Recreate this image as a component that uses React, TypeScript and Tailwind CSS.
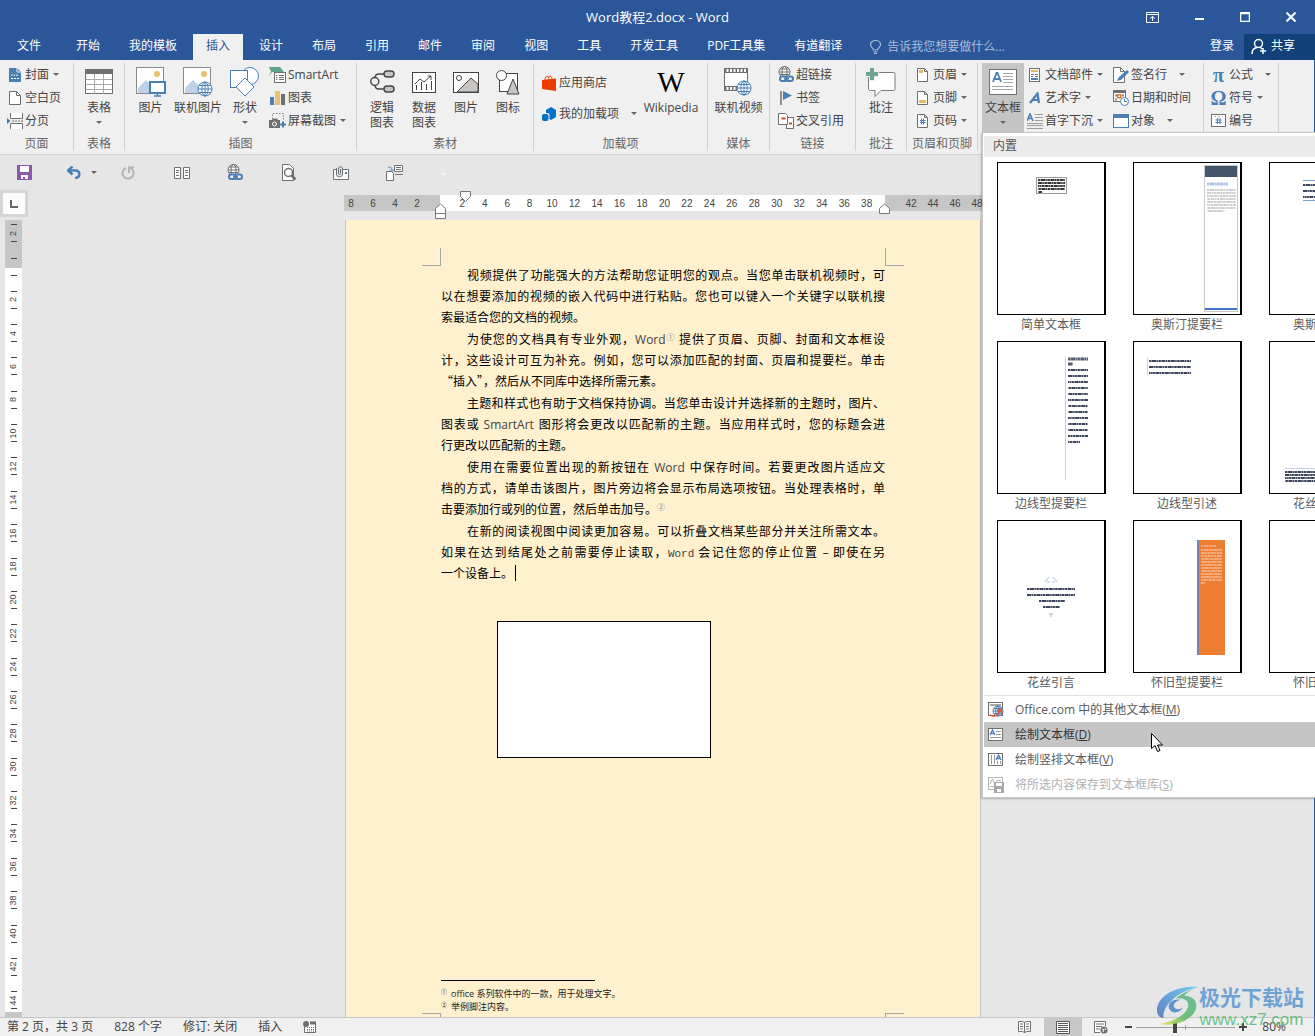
import React from "react";

type Kids = { children?: React.ReactNode };

const Svg = ({ w, h, children }: Kids & { w: number; h: number }) => (
  <svg width={w} height={h} viewBox={`0 0 ${w} ${h}`} fill="none" className="shrink-0" aria-hidden="true">
    {children}
  </svg>
);

const G = "#6f6f6f";
const B = "#4a7fb5";

const Caret = () => (
  <Svg w={6} h={3}>
    <path d="M0 0h6L3 3z" fill="#666" />
  </Svg>
);

/* ---------- ribbon icons ---------- */

const CoverIcon = () => (
  <Svg w={12} h={14}>
    <path d="M0 0h8l4 4v10H0z" fill={B} />
    <path d="M8 0v4h4" stroke="#f0f0f0" />
    <path d="M2 7.500l1.500-1 1.500 1 1.500-1 1.500 1 1.500-1M2 10.500h8" stroke="#fff" strokeDasharray="2 1" />
  </Svg>
);
const BlankIcon = () => (
  <Svg w={12} h={14}>
    <path d="M.5.5h7l4 4v9H.5z" fill="#fff" stroke={G} />
    <path d="M7.500.5v4h4" stroke={G} />
  </Svg>
);
const BreakIcon = () => (
  <Svg w={16} h={16}>
    <path d="M3.500 0v5.500h12V0M3.500 16v-5.500h12V16" fill="#fff" stroke={G} />
    <path d="M5 8h11" stroke={G} strokeDasharray="2 1" />
    <path d="M0 5l3.500 3L0 11z" fill="#2f7cc4" />
  </Svg>
);
const TableIcon = () => (
  <Svg w={28} h={26}>
    <rect x=".5" y=".5" width="27" height="24" fill="#fff" stroke={G} />
    <rect width="28" height="5" fill={G} />
    <path d="M1 10.500h26M1 15.500h26M1 20.500h26M9.500 5v20M18.500 5v20" stroke="#a9a9a9" />
  </Svg>
);
const Globe = ({ x, y, r }: { x: number; y: number; r: number }) => (
  <g stroke={B} fill="#fff">
    <circle cx={x} cy={y} r={r} />
    <ellipse cx={x} cy={y} rx={r * 0.45} ry={r} fill="none" />
    <path d={`M${x - r} ${y}h${2 * r}M${x - r + 1} ${y - r / 2}h${2 * r - 2}M${x - r + 1} ${y + r / 2}h${2 * r - 2}M${x} ${y - r}v${2 * r}`} fill="none" />
  </g>
);
const Photo = () => (
  <g>
    <rect x=".5" y=".5" width="27" height="26" fill="#fff" stroke="#8a8a8a" />
    <circle cx="21" cy="7" r="3" fill="#eec071" />
    <path d="M2 26v-5l8-8 9 9v4z" fill="#bfd1e8" />
  </g>
);
const PictureIcon = () => (
  <Svg w={30} h={30}>
    <Photo />
    <rect x="14" y="15" width="15" height="11" fill="#fff" stroke={B} strokeWidth="2" />
    <path d="M21.500 27v2M18 29h7" stroke={B} strokeWidth="1.500" />
  </Svg>
);
const OnlinePictureIcon = () => (
  <Svg w={30} h={30}>
    <Photo />
    <Globe x={22} y={22} r={7} />
  </Svg>
);
const ShapesIcon = () => (
  <Svg w={30} h={30}>
    <circle cx="20" cy="9" r="8.500" fill="#fff" stroke={B} />
    <rect x=".5" y="3.500" width="17" height="17" fill="#fff" stroke={B} />
    <path d="M15 11l9 9-9 9-9-9z" fill="#fff" stroke={B} />
  </Svg>
);
const SmartArtIcon = () => (
  <Svg w={17} h={16}>
    <path d="M0 0h11l4 5H3L0 9l2-4.500z" fill="#5fa38a" />
    <rect x="5.500" y="5.500" width="11" height="10" fill="#fff" stroke={G} />
    <path d="M7 8.500h1.500M7 10.500h1.500M7 12.500h1.500M10 8.500h5M10 10.500h5M10 12.500h5" stroke={G} />
  </Svg>
);
const ChartIcon = () => (
  <Svg w={15} h={14}>
    <path d="M0 6h4v8H0z" fill={B} />
    <path d="M5 0h5v14H5z" fill="#eec071" />
    <path d="M11 3h4v11h-4z" fill={G} />
  </Svg>
);
const ScreenshotIcon = () => (
  <Svg w={17} h={15}>
    <path d="M3.500 6V.5h11v7" stroke="#888" strokeDasharray="1.500 1.500" />
    <path d="M0 7h3l1-1.500h4L9 7h2v8H0z" fill={G} />
    <circle cx="5.500" cy="11" r="2" fill={G} stroke="#fff" />
    <path d="M14 8.500v6M11 11.500h6" stroke={B} strokeWidth="2" />
  </Svg>
);
const LogicIcon = () => (
  <Svg w={25} h={24}>
    <path d="M14 4H9C6 4 5 6 5 8M14 19H9c-3 0-4-2-4-4" stroke="#444" strokeWidth="1.400" />
    <circle cx="4.800" cy="11.500" r="4" fill="#f0f0f0" stroke="#444" strokeWidth="1.400" />
    <rect x="14" y="1" width="10" height="6" rx="3" fill="#c9c5c2" stroke="#444" strokeWidth="1.400" />
    <rect x="14" y="16" width="10" height="6" rx="3" fill="#c9c5c2" stroke="#444" strokeWidth="1.400" />
  </Svg>
);
const DataChartIcon = () => (
  <Svg w={24} h={21}>
    <rect x=".5" y=".5" width="23" height="20" fill="#fff" stroke="#444" />
    <path d="M4.500 18v-5M9.500 18v-8M14.500 18v-6M19.500 18v-9" stroke="#444" />
    <path d="M3 12l5-5 4 3 7-6M15.500 4H19v4" stroke="#444" />
  </Svg>
);
const ImageIcon = () => (
  <Svg w={26} h={21}>
    <rect x=".5" y=".5" width="25" height="20" fill="#fff" stroke="#444" />
    <path d="M4 20L18 6l7 6v8z" fill="#c9c5c2" stroke="#444" />
    <circle cx="6" cy="6" r="2.500" fill="#fff" stroke="#444" />
  </Svg>
);
const GlyphIcon = () => (
  <Svg w={24} h={25}>
    <rect x="3.500" y="3.500" width="18" height="18" fill="#fff" stroke="#444" />
    <circle cx="5.500" cy="5.500" r="5" fill="#fff" stroke="#444" />
    <path d="M17 9l6 15H11z" fill="#c9c5c2" stroke="#444" />
  </Svg>
);
const StoreIcon = () => (
  <Svg w={14} h={16}>
    <path d="M0 5l14-1.500V16L0 14z" fill="#eb3c00" />
    <path d="M3 5c0-5 4-5 4 0M6 3c1-3 4-2 4 1" stroke="#eb3c00" />
  </Svg>
);
const AddinIcon = () => (
  <Svg w={14} h={14}>
    <path d="M4 3l5-3 5 3v7l-5 3-5-3z" fill="#0072c6" />
    <rect x="-1" y="6" width="8.500" height="9" rx="2" fill="#f0f0f0" />
    <rect x="0" y="7" width="6.500" height="7" rx="2" fill="#0072c6" />
  </Svg>
);
const VideoIcon = () => (
  <Svg w={29} h={29}>
    <rect x=".5" y=".5" width="23" height="22" fill="#fff" stroke={G} />
    <path d="M1 2.500h23M1 20.500h23" stroke={G} strokeWidth="3" strokeDasharray="1.500 2" />
    <path d="M0 4.500h24M0 18.500h24" stroke={G} />
    <Globe x={20} y={20} r={7} />
  </Svg>
);
const HyperlinkIcon = () => (
  <Svg w={16} h={17}>
    <g stroke={G}>
      <circle cx="6.500" cy="6" r="5.500" fill="#fff" />
      <ellipse cx="6.500" cy="6" rx="2.500" ry="5.500" />
      <path d="M1 6h11M2 3h9M2 8.500h9" />
    </g>
    <g stroke={B} strokeWidth="2">
      <rect x="2" y="10.500" width="7" height="4.500" rx="2.200" fill="#f0f0f0" />
      <rect x="8" y="10.500" width="7" height="4.500" rx="2.200" fill="#f0f0f0" />
      <path d="M6 12.700h5" />
    </g>
  </Svg>
);
const BookmarkIcon = () => (
  <Svg w={12} h={14}>
    <path d="M1 0v14" stroke={G} strokeWidth="1.500" />
    <path d="M3 0l9 4.500L3 9z" fill={B} />
  </Svg>
);
const CrossRefIcon = () => (
  <Svg w={16} h={16}>
    <rect x="8.500" y="4.500" width="7" height="11" fill="#fff" stroke={G} />
    <path d="M.5.5h7l2 2v9H.5z" fill="#fff" stroke={G} />
    <path d="M3.500 5.500h4M11 10.500h3" stroke="#d24726" strokeWidth="2" />
  </Svg>
);
const CommentIcon = () => (
  <Svg w={30} h={29}>
    <path d="M4.500 4.500h23a1.500 1.500 0 011.500 1.500v15a1.500 1.500 0 01-1.500 1.500H15l-6 6v-6H4.500A2 2 0 012.500 20V6z" fill="#fff" stroke="#7d7d7d" />
    <path d="M6 0v13M0 6h13" stroke="#f0f0f0" strokeWidth="6" />
    <path d="M6 0v12M0 6h12" stroke="#6fa592" strokeWidth="4" />
  </Svg>
);
const PageIcon = ({ kind }: { kind: "head" | "foot" | "num" }) => (
  <Svg w={11} h={14}>
    <path d="M.5.5h7l3 3v10H.5z" fill="#fff" stroke={G} />
    <path d="M7.500.5v3h3" stroke={G} />
    {kind === "head" && <path d="M2 2h4v3H2z" fill="#e8b860" />}
    {kind === "foot" && <path d="M2 9h7v3H2z" fill="#e8b860" />}
    {kind === "num" && <path d="M4.500 4.500v6M6.500 4.500v6M3 6.500h5.500M3 8.500h5.500" stroke={B} />}
  </Svg>
);
const TextBoxIcon = () => (
  <Svg w={28} h={26}>
    <rect x=".5" y=".5" width="27" height="25" fill="#fff" stroke={G} />
    <path d="M4 13L7.500 4h1L12 13M5.500 10h5" stroke={B} strokeWidth="1.800" />
    <path d="M14 4.500h10M14 7.500h10M14 10.500h10M14 13.500h10M3 17.500h21M3 20.500h21" stroke="#a6a6a6" />
  </Svg>
);
const PartsIcon = () => (
  <Svg w={11} h={14}>
    <rect x=".5" y=".5" width="10" height="13" fill="#fff" stroke={G} />
    <path d="M2 3h7" stroke="#e8b860" strokeWidth="2" />
    <path d="M2 6.500h3M6 6.500h3M6 8.500h3M2 8.500h2" stroke={G} />
    <path d="M2 11h7" stroke={B} strokeWidth="2" />
  </Svg>
);
const WordArtIcon = () => (
  <Svg w={12} h={12}>
    <path d="M1 11L8.500 1.500 10 11M4 8h6" stroke={B} strokeWidth="2.200" />
  </Svg>
);
const DropCapIcon = () => (
  <Svg w={16} h={16}>
    <path d="M0 8L3 1l3 7M1 5.500h4" stroke={B} strokeWidth="1.600" />
    <path d="M8 1.500h8M8 4.500h8M8 7.500h8M0 10.500h16M0 12.500h16M0 15.500h16" stroke="#9b9b9b" />
  </Svg>
);
const SignatureIcon = () => (
  <Svg w={16} h={16}>
    <path d="M.5.5h7l4 4v11H.5z" fill="#fff" stroke={G} />
    <path d="M7.500.5v4h4" stroke={G} />
    <path d="M4 14l2-4 8-7 2 2-8 8z" fill={B} />
  </Svg>
);
const DateIcon = () => (
  <Svg w={16} h={16}>
    <rect x=".5" y=".5" width="12" height="11" fill="#fff" stroke={G} />
    <path d="M0 1.500h13" stroke={G} strokeWidth="3" />
    <path d="M2 5.500h2M9 5.500h2M2 9.500h2" stroke="#888" strokeWidth="2" />
    <rect x="4.800" y="4.800" width="3" height="3" stroke="#e07a1f" strokeWidth="1.500" />
    <circle cx="11.500" cy="11.500" r="4" fill="#fff" stroke={B} />
    <path d="M11.500 9v2.500H14" stroke={B} />
  </Svg>
);
const ObjectIcon = () => (
  <Svg w={16} h={14}>
    <rect x=".5" y=".5" width="15" height="13" fill="#fff" stroke={B} />
    <path d="M0 2h16" stroke={B} strokeWidth="4" />
  </Svg>
);
const NumberIcon = () => (
  <Svg w={15} h={13}>
    <rect x=".5" y=".5" width="14" height="12" fill="#fff" stroke={G} />
    <path d="M6.500 4v6M9 4v6M4.500 6h6M4.500 8.500h6" stroke={B} />
    <path d="M3 2.500h2M7 2.500h2M11 2.500h1" stroke="#aaa" />
  </Svg>
);

/* ---------- ribbon parts ---------- */

const Group = ({ label, cls, children }: Kids & { label: string; cls: string }) => (
  <section className={`flex shrink-0 flex-col ${cls}`} aria-label={label}>
    <div className="flex h-[69px] flex-1 border-r border-[#d0d0d0]">{children}</div>
    <div className="h-[19px] border-r border-[#d0d0d0] text-center leading-[24px] text-[#666]">{label}</div>
  </section>
);

const Small = ({ icon, text, caret, far }: { icon: React.ReactNode; text: string; caret?: boolean; far?: boolean }) => (
  <button className="flex h-[23px] items-center whitespace-nowrap">
    <span className="flex w-[20px] items-center justify-center pr-px">{icon}</span>
    <span>{text}</span>
    {caret && (
      <span className={far ? "pl-3" : "pl-1"}>
        <Caret />
      </span>
    )}
  </button>
);

const Big = ({ icon, lines, caret, cls }: { icon: React.ReactNode; lines: string[]; caret?: boolean; cls: string }) => (
  <button className={`flex h-[69px] flex-col items-center ${cls}`}>
    <span className="flex h-[37px] items-center justify-center pt-px">{icon}</span>
    {lines.map((l) => (
      <span key={l} className="h-[15px] leading-[15px] whitespace-nowrap">
        {l}
      </span>
    ))}
    {caret && (
      <span className="flex h-[14px] items-center">
        <Caret />
      </span>
    )}
  </button>
);

const Serif = ({ children }: Kids) => (
  <span className="font-['Liberation_Serif',serif] text-[20px] leading-none font-bold text-[#4a7fb5]">{children}</span>
);

/* ---------- gallery ---------- */

const Lines = ({ x, y, w, n, step, color, last = 0.6, sw = 1.5 }: { x: number; y: number; w: number; n: number; step: number; color: string; last?: number; sw?: number }) => (
  <g stroke={color} strokeWidth={sw} strokeDasharray="2.500 .5 4 .4 1.500 .5" opacity=".85">
    {Array.from({ length: n }, (_, i) => (
      <path key={i} d={`M${x} ${y + i * step}h${i === n - 1 ? w * last : w}`} strokeDashoffset={i * 3} />
    ))}
  </g>
);

const NAVY = "#1b2440";

const gallery: { label: string; art: React.ReactNode }[] = [
  {
    label: "简单文本框",
    art: (
      <>
        <rect x="38.500" y="14.500" width="30" height="16" stroke="#999" />
        <Lines x={40} y={17} w={27} n={5} step={3} color="#111" last={0.15} sw={2} />
      </>
    ),
  },
  {
    label: "奥斯汀提要栏",
    art: (
      <>
        <rect x="70.500" y="2.500" width="33" height="146" stroke="#c9c9c9" />
        <rect x="71" y="3" width="32" height="11" fill="#44546a" />
        <Lines x={73} y={21} w={21} n={1} step={3} color="#9db8e3" last={1} sw={3} />
        <Lines x={73} y={27} w={29} n={8} step={3} color="#b5b5b5" />
        <path d="M71 146h32" stroke="#4472c4" strokeWidth="2" />
      </>
    ),
  },
  {
    label: "奥斯汀引言",
    art: (
      <>
        <path d="M33 17.500h60M33 37.500h60" stroke="#7d9fd8" />
        <Lines x={33} y={22} w={58} n={3} step={6} color={NAVY} sw={2} />
      </>
    ),
  },
  {
    label: "边线型提要栏",
    art: (
      <>
        <path d="M67.500 14v124" stroke="#c3cee6" />
        <Lines x={70} y={17} w={20} n={2} step={5} color="#333c55" last={0.25} sw={3} />
        <Lines x={70} y={28} w={20} n={13} step={6} color={NAVY} sw={2} />
      </>
    ),
  },
  {
    label: "边线型引述",
    art: (
      <>
        <path d="M13.500 16v17" stroke="#c3cee6" />
        <Lines x={15} y={19} w={42} n={3} step={6} color={NAVY} last={1} sw={2} />
      </>
    ),
  },
  {
    label: "花丝提要栏",
    art: (
      <>
        <path d="M15 126.500h80" stroke="#c3cee6" />
        <Lines x={15} y={130} w={80} n={4} step={3} color={NAVY} sw={2} />
      </>
    ),
  },
  {
    label: "花丝引言",
    art: (
      <>
        <path d="M47 61l4-5M59 61l-4-5M49 61h3M54 61h3M51 93h4M53 92v4" stroke="#a9bedd" />
        <Lines x={29} y={68} w={48} n={2} step={6} color={NAVY} last={1} sw={2} />
        <Lines x={41} y={80} w={26} n={1} step={6} color={NAVY} last={1} sw={2} />
        <Lines x={45} y={86} w={17} n={1} step={6} color={NAVY} last={1} sw={2} />
      </>
    ),
  },
  {
    label: "怀旧型提要栏",
    art: (
      <>
        <rect x="63" y="19" width="28" height="115" fill="#ed7d31" />
        <path d="M64 19v115" stroke="#6f86bd" strokeWidth="2" />
        <Lines x={67} y={25} w={15} n={1} step={3} color="#f6bf98" last={1} />
        <Lines x={67} y={29} w={21} n={12} step={3} color="#f8cbad" last={0.2} />
      </>
    ),
  },
  { label: "怀旧型引言", art: null },
];

const ArtBox = ({ label, art }: { label: string; art: React.ReactNode }) => (
  <button className="flex h-[179px] w-[136px] flex-col items-center">
    <span className="block h-[153px] w-[109px] border border-r-2 border-black bg-white">
      <svg width="106" height="151" viewBox="0 0 106 151" fill="none" aria-hidden="true">
        {art}
      </svg>
    </span>
    <span className="h-[20px] leading-[20px]">{label}</span>
  </button>
);

const MenuOfficeIcon = () => (
  <Svg w={17} h={16}>
    <rect x=".5" y=".5" width="14" height="13" fill="#fff" stroke={G} />
    <path d="M2 3h11" stroke="#aaa" strokeWidth="2" />
    <Globe x={10} y={9} r={5} />
    <path d="M2 13c6 3 9-1 10-5M9 9l4-2 1 4" stroke="#e8562a" strokeWidth="1.600" />
  </Svg>
);
const MenuHIcon = () => (
  <Svg w={15} h={13}>
    <rect x=".5" y=".5" width="14" height="12" fill="#fff" stroke={G} />
    <path d="M2 7l2.500-5L7 7M3 5.500h3" stroke={B} strokeWidth="1.300" />
    <path d="M8 3.500h5M8 6.500h5M2 9.500h11" stroke="#999" />
  </Svg>
);
const MenuVIcon = () => (
  <Svg w={15} h={13}>
    <rect x=".5" y=".5" width="14" height="12" fill="#fff" stroke={G} />
    <path d="M3.500 2v9M6.500 2v9M9.500 8v3M12.500 8v3" stroke="#999" />
    <path d="M8 7l2.500-5L13 7M9 5.500h3" stroke={B} strokeWidth="1.300" />
  </Svg>
);
const MenuSaveIcon = () => (
  <Svg w={17} h={16}>
    <rect x=".5" y=".5" width="14" height="12" fill="#fff" stroke="#b5b5b5" />
    <path d="M2 7l2.500-5L7 7M8 3.500h5M2 9.500h4" stroke="#b5b5b5" />
    <path d="M6 5h10v11H6z" fill="#a9a9a9" />
    <path d="M8 6h6v3H8zM9 12h4v3H9z" fill="#fff" />
  </Svg>
);

const MenuItem = ({ icon, text, k, cls }: { icon: React.ReactNode; text: string; k: string; cls: string }) => (
  <button role="menuitem" className={`flex h-[25px] w-full items-center text-left ${cls}`}>
    <span className="flex w-[31px] items-center pl-1">{icon}</span>
    <span>
      {text}(<u>{k}</u>)
    </span>
  </button>
);

const TextBoxMenu = () => (
  <div
    role="menu"
    className="absolute top-[69px] left-0 z-20 w-[420px] border border-[#c6c6c6] bg-white text-[#5a5a5a] shadow-[-1px_1px_2px_rgba(0,0,0,0.25)]"
  >
    <div className="mt-[3px] ml-px h-[21px] bg-[#ebebeb] pl-[9px] leading-[20px] text-[#555]">内置</div>
    <div className="grid w-[408px] grid-cols-3 pt-[5px]">
      {gallery.map((g) => (
        <ArtBox key={g.label} {...g} />
      ))}
    </div>
    <div className="-mt-1 ml-px border-t border-[#e1e1e1] pt-px">
      <MenuItem icon={<MenuOfficeIcon />} text="Office.com 中的其他文本框" k="M" cls="" />
      <MenuItem icon={<MenuHIcon />} text="绘制文本框" k="D" cls="bg-[#c5c5c5] text-[#333]" />
      <MenuItem icon={<MenuVIcon />} text="绘制竖排文本框" k="V" cls="" />
      <MenuItem icon={<MenuSaveIcon />} text="将所选内容保存到文本框库" k="S" cls="text-[#b1b1b1]" />
    </div>
    <svg className="absolute top-[600px] left-[168px]" width="13" height="20" viewBox="0 0 13 20" aria-hidden="true">
      <path d="M.5.500v15l3.500-3 2.500 6 2.500-1-2.500-5.500h5z" fill="#fff" stroke="#000" />
    </svg>
  </div>
);

/* ---------- title bar and tabs ---------- */

const tabsBefore = ["开始", "我的模板"];
const tabsAfter = ["设计", "布局", "引用", "邮件", "审阅", "视图", "工具", "开发工具", "PDF工具集", "有道翻译"];

const Header = () => (
  <header className="bg-[#2b579a] text-white">
    <div className="grid h-[34px] grid-cols-[1fr_auto_1fr] items-center">
      <span />
      <h1 className="pt-px text-[13px]">Word教程2.docx - Word</h1>
      <div className="flex h-full items-center justify-end gap-[36px] pr-[19px]">
        <button aria-label="功能区显示选项">
          <Svg w={13} h={11}>
            <path d="M.5.5h12v10H.5zM1 2.500h12M6.500 9V4.500M4 6.500l2.500-2 2.500 2" stroke="#fff" />
          </Svg>
        </button>
        <button aria-label="最小化" className="pt-1">
          <Svg w={9} h={2}>
            <path d="M0 1h9" stroke="#fff" strokeWidth="2" />
          </Svg>
        </button>
        <button aria-label="最大化">
          <Svg w={10} h={10}>
            <path d="M.5.5h9v9h-9zM0 1.500h10" stroke="#fff" strokeWidth="1.500" />
          </Svg>
        </button>
        <button aria-label="关闭">
          <Svg w={10} h={10}>
            <path d="M.5.500l9 9M9.500.5l-9 9" stroke="#fff" strokeWidth="2" />
          </Svg>
        </button>
      </div>
    </div>
    <nav className="flex h-[26px] items-stretch whitespace-nowrap">
      <div className="flex gap-[3px]">
        <button className="w-[60px] pb-0.5 pl-[17px] text-left">文件</button>
        {tabsBefore.map((t) => (
          <button key={t} className="px-[13px] pb-0.5">
            {t}
          </button>
        ))}
        <button className="bg-[#f0f0f0] px-[13px] pb-0.5 text-[#2b579a]">插入</button>
        {tabsAfter.map((t) => (
          <button key={t} className="px-[13px] pb-0.5">
            {t}
          </button>
        ))}
      </div>
      <label className="flex items-center gap-1.5 pl-[15px] text-[#b1c3e0]">
        <Svg w={11} h={14}>
          <path d="M3.500 10c0-2-3-2.500-3-5.500a5 4 0 0110 0c0 3-3 3.500-3 5.500zM3.500 12h4M4 13.500h3" stroke="#a9bcdb" strokeWidth="1.200" />
        </Svg>
        <input className="w-[160px] bg-transparent outline-none placeholder:text-[#a9bcdb]" placeholder="告诉我您想要做什么..." />
      </label>
      <div className="ml-auto flex">
        <button className="pr-[10px] pb-0.5">登录</button>
        <button className="flex w-[71px] items-center gap-1 bg-[#124078] pb-0.5 pl-[7px]">
          <Svg w={16} h={17}>
            <circle cx="7.500" cy="5.500" r="4" stroke="#fff" strokeWidth="1.500" />
            <path d="M1 16c0-4 2-6 5-6.500M9 9l2 2M12 10v6M9 13h6" stroke="#fff" strokeWidth="1.500" />
          </Svg>
          共享
        </button>
      </div>
    </nav>
  </header>
);

const Ribbon = () => (
  <div className="flex h-[95px] border-r border-b border-r-[#2b579a] border-b-[#d2d2d2] bg-[#f0f0f0] pt-[3px] pb-1 text-[#444]">
    <Group label="页面" cls="w-[74px]">
      <div className="flex flex-col pl-[5px]">
        <Small icon={<CoverIcon />} text="封面" caret />
        <Small icon={<BlankIcon />} text="空白页" />
        <Small icon={<BreakIcon />} text="分页" />
      </div>
    </Group>
    <Group label="表格" cls="w-[51px]">
      <Big icon={<TableIcon />} lines={["表格"]} caret cls="w-full" />
    </Group>
    <Group label="插图" cls="w-[232px]">
      <Big icon={<PictureIcon />} lines={["图片"]} cls="ml-[3px] w-[45px]" />
      <Big icon={<OnlinePictureIcon />} lines={["联机图片"]} cls="w-[50px]" />
      <Big icon={<ShapesIcon />} lines={["形状"]} caret cls="w-[44px]" />
      <div className="flex flex-col pl-px">
        <Small icon={<SmartArtIcon />} text="SmartArt" />
        <Small icon={<ChartIcon />} text="图表" />
        <Small icon={<ScreenshotIcon />} text="屏幕截图" caret />
      </div>
    </Group>
    <Group label="素材" cls="w-[177px]">
      <Big icon={<LogicIcon />} lines={["逻辑", "图表"]} cls="ml-[4px] w-[42px]" />
      <Big icon={<DataChartIcon />} lines={["数据", "图表"]} cls="w-[42px]" />
      <Big icon={<ImageIcon />} lines={["图片"]} cls="w-[42px]" />
      <Big icon={<GlyphIcon />} lines={["图标"]} cls="w-[42px]" />
    </Group>
    <Group label="加载项" cls="w-[174px]">
      <div className="flex flex-col gap-2 pt-2 pl-[5px]">
        <Small icon={<StoreIcon />} text="应用商店" />
        <Small icon={<AddinIcon />} text="我的加载项" caret far />
      </div>
      <Big
        icon={<span className="font-['Liberation_Serif',serif] text-[29px] leading-none text-black">W</span>}
        lines={["Wikipedia"]}
        cls="w-[68px]"
      />
    </Group>
    <Group label="媒体" cls="w-[62px]">
      <Big icon={<VideoIcon />} lines={["联机视频"]} cls="w-full" />
    </Group>
    <Group label="链接" cls="w-[86px]">
      <div className="flex flex-col pl-[6px]">
        <Small icon={<HyperlinkIcon />} text="超链接" />
        <Small icon={<BookmarkIcon />} text="书签" />
        <Small icon={<CrossRefIcon />} text="交叉引用" />
      </div>
    </Group>
    <Group label="批注" cls="w-[51px]">
      <Big icon={<CommentIcon />} lines={["批注"]} cls="w-full" />
    </Group>
    <Group label="页眉和页脚" cls="w-[71px]">
      <div className="flex flex-col pl-[6px]">
        <Small icon={<PageIcon kind="head" />} text="页眉" caret />
        <Small icon={<PageIcon kind="foot" />} text="页脚" caret />
        <Small icon={<PageIcon kind="num" />} text="页码" caret />
      </div>
    </Group>
    <Group label="文本" cls="w-[226px]">
      <div className="relative ml-[4px] h-[70px] w-[42px] bg-[#c5c5c5]">
        <Big icon={<TextBoxIcon />} lines={["文本框"]} caret cls="w-full" />
        <TextBoxMenu />
      </div>
      <div className="flex w-[87px] flex-col pl-px">
        <Small icon={<PartsIcon />} text="文档部件" caret />
        <Small icon={<WordArtIcon />} text="艺术字" caret />
        <Small icon={<DropCapIcon />} text="首字下沉" caret />
      </div>
      <div className="flex flex-col">
        <Small icon={<SignatureIcon />} text="签名行" caret far />
        <Small icon={<DateIcon />} text="日期和时间" />
        <Small icon={<ObjectIcon />} text="对象" caret far />
      </div>
    </Group>
    <Group label="符号" cls="w-[75px]">
      <div className="flex flex-col pl-[5px]">
        <Small icon={<Serif>π</Serif>} text="公式" caret far />
        <Small icon={<Serif>Ω</Serif>} text="符号" caret />
        <Small icon={<NumberIcon />} text="编号" />
      </div>
    </Group>
  </div>
);

/* ---------- quick access bar ---------- */

const QuickBar = () => (
  <div className="flex h-[35px] shrink-0 items-center border-r border-[#2b579a] pl-[17px]">
    <button aria-label="保存" className="w-[50px]">
      <Svg w={15} h={15}>
        <path d="M0 0h15v15H0z" fill="#8a57ab" />
        <path d="M3 1h9v6H3zM4 10h7v4H8v-2H6v2H4z" fill="#fff" />
      </Svg>
    </button>
    <button aria-label="撤消" className="flex w-[54px] items-center gap-2">
      <Svg w={16} h={13}>
        <path d="M1 4.500h8a4 3.800 0 010 7.500H8M5.500.5l-4.500 4 4.500 4" stroke={B} strokeWidth="2.400" />
      </Svg>
      <Caret />
    </button>
    <button aria-label="重复" className="w-[53px]">
      <Svg w={14} h={14}>
        <path d="M5 2A5.500 5.500 0 1010 2.500M8 7V1.500h5" stroke="#b5b5b5" strokeWidth="2" />
      </Svg>
    </button>
    <button aria-label="并排查看" className="w-[53px]">
      <Svg w={16} h={12}>
        <path d="M.5.5h6v11h-6zM9.500.5h6v11h-6z" fill="#fff" stroke={G} />
        <path d="M2 3.500h3M2 5.500h3M2 8.500h3M11 3.500h3M11 5.500h3M11 8.500h3" stroke={G} />
      </Svg>
    </button>
    <button aria-label="超链接" className="w-[54px]">
      <HyperlinkIcon />
    </button>
    <button aria-label="打印预览" className="w-[52px]">
      <Svg w={16} h={17}>
        <path d="M1.500.5h7l4 4v12h-11z" fill="#fff" stroke={G} />
        <circle cx="7.500" cy="8.500" r="4" fill="#fff" stroke={G} strokeWidth="1.500" />
        <path d="M10.500 11.500l4 4" stroke={G} strokeWidth="2.500" />
      </Svg>
    </button>
    <button aria-label="附件" className="w-[53px]">
      <Svg w={16} h={16}>
        <path d="M.5 4.500h15v10H.5z" fill="#fff" stroke={G} />
        <path d="M12 7h2v2h-2z" fill={B} />
        <path d="M3.500 3v6a3 3 0 006 0V3a2.200 2.200 0 00-4 0v5.500a1 1 0 002 0V4" fill="#e6e6e6" stroke={G} />
      </Svg>
    </button>
    <button aria-label="交叉引用" className="w-[55px]">
      <Svg w={17} h={16}>
        <path d="M.5 6.500h5l2 2v7h-7z" fill="#fff" stroke={G} />
        <path d="M8.500.5h8v6h-8z" fill="#fff" stroke={G} />
        <path d="M10 2.500h5M10 4.500h5M9 9.500h8" stroke={G} />
        <path d="M2 3c2-2 4-1 4 3M4 4.500l2 2 2-2" stroke={B} />
      </Svg>
    </button>
    <button aria-label="自定义">
      <Svg w={5} h={6}>
        <path d="M0 .5h5M0 3h5L2.500 6z" fill="#f5f5f5" stroke="#f5f5f5" strokeWidth=".5" />
      </Svg>
    </button>
  </div>
);

/* ---------- rulers ---------- */

const evens = (from: number, to: number) => Array.from({ length: (to - from) / 2 + 1 }, (_, i) => from + i * 2);

const VTick = () => <span className="h-px w-[6px] shrink-0 bg-[#444]" />;
const VNum = ({ n }: { n: number }) => (
  <span className="flex h-4 items-center justify-center">
    <span className="-rotate-90">{n}</span>
  </span>
);

const VRuler = () => (
  <div className="relative ml-[5px] flex w-[17px] flex-1 flex-col overflow-hidden bg-white font-['Liberation_Sans',sans-serif] text-[9px] leading-none text-[#444]">
    <div className="flex h-[48px] shrink-0 flex-col items-center bg-[#c6c6c6] pt-1">
      <VTick />
      <VNum n={2} />
      <VTick />
      <span className="h-4" />
      <VTick />
    </div>
    <div className="flex h-[15px] shrink-0 flex-col items-center pt-[7px]">
      <VTick />
    </div>
    {evens(2, 44).map((n) => (
      <div key={n} className="flex min-h-0 flex-1 flex-col items-center justify-center">
        <VTick />
        <VNum n={n} />
        <VTick />
      </div>
    ))}
    <div className="absolute inset-x-0 bottom-0 h-[5px] bg-[#c6c6c6]" />
  </div>
);

const HRuler = () => (
  <div className="relative flex h-4 w-[638px] font-['Liberation_Sans',sans-serif] text-[10px] leading-[17px] text-[#444]">
    <div className="flex w-[96px] justify-end overflow-hidden bg-[#c6c6c6] pr-[12px]">
      {[8, 6, 4, 2].map((n) => (
        <span key={n} className="w-[22px] shrink-0 text-center">
          {n}
        </span>
      ))}
    </div>
    <div className="flex w-[445px] bg-white pr-[7px] pl-[11px]">
      {evens(2, 38).map((n) => (
        <span key={n} className="min-w-0 flex-1 text-center">
          {n}
        </span>
      ))}
    </div>
    <div className="flex flex-1 overflow-hidden bg-[#c6c6c6] pl-[15px]">
      {[42, 44, 46, 48].map((n) => (
        <span key={n} className="w-[22px] shrink-0 text-center">
          {n}
        </span>
      ))}
    </div>
    <svg className="absolute -top-1 left-[91px]" width="456" height="30" viewBox="0 0 456 30" fill="#fff" stroke="#777" aria-hidden="true">
      <path d="M25.500.5h10v5l-5 5-5-5z" fillOpacity=".7" />
      <path d="M.5 22.500v-5l5-4.500 5 4.500v10H.5zM.5 22.500h10" />
      <path d="M444.500 22.500v-5l5-4.500 5 4.500v5z" />
    </svg>
  </div>
);

/* ---------- document ---------- */

const FullLine = ({ first, children }: Kids & { first?: boolean }) => (
  <span
    className={
      first
        ? "block h-[21px] pl-[26px] whitespace-nowrap [text-align-last:justify]"
        : "block h-[21px] whitespace-nowrap [text-align-last:justify]"
    }
  >
    {children}
  </span>
);
const EndLine = ({ children }: Kids) => <span className="block h-[21px] whitespace-nowrap">{children}</span>;
const Latin = ({ children }: Kids) => <span className="px-1 font-['Open_Sans',sans-serif] text-[#444]">{children}</span>;
const Mark = ({ children }: Kids) => <sup className="text-[8px] text-[#888]">{children}</sup>;

const Corner = ({ cls }: { cls: string }) => <span className={`absolute h-[18px] w-[19px] border-[#a6a6a6] ${cls}`} />;

const Page = () => (
  <article className="relative flex w-[636px] flex-1 flex-col overflow-hidden border-x border-[#c6c6c6] bg-[#fff0ce] px-[95px] pt-[44px] text-black">
    <Corner cls="top-[28px] left-[76px] border-r border-b" />
    <Corner cls="top-[28px] right-[76px] border-b border-l" />
    <Corner cls="top-[793px] left-[76px] border-t border-r" />
    <Corner cls="top-[793px] right-[76px] border-t border-l" />
    <div lang="zh-CN" className="flex flex-col gap-px font-['Noto_Sans_CJK_SC',sans-serif] leading-[21px]">
      <p>
        <FullLine first>视频提供了功能强大的方法帮助您证明您的观点。当您单击联机视频时，可</FullLine>
        <FullLine>以在想要添加的视频的嵌入代码中进行粘贴。您也可以键入一个关键字以联机搜</FullLine>
        <EndLine>索最适合您的文档的视频。</EndLine>
      </p>
      <p>
        <FullLine first>
          为使您的文档具有专业外观，<span className="font-['Open_Sans',sans-serif] text-[#444]">Word</span>
          <Mark>①</Mark> 提供了页眉、页脚、封面和文本框设
        </FullLine>
        <FullLine>计，这些设计可互为补充。例如，您可以添加匹配的封面、页眉和提要栏。单击</FullLine>
        <EndLine>“插入”，然后从不同库中选择所需元素。</EndLine>
      </p>
      <p>
        <FullLine first>主题和样式也有助于文档保持协调。当您单击设计并选择新的主题时，图片、</FullLine>
        <FullLine>
          图表或<Latin>SmartArt</Latin>图形将会更改以匹配新的主题。当应用样式时，您的标题会进
        </FullLine>
        <EndLine>行更改以匹配新的主题。</EndLine>
      </p>
      <p>
        <FullLine first>
          使用在需要位置出现的新按钮在<Latin>Word</Latin>中保存时间。若要更改图片适应文
        </FullLine>
        <FullLine>档的方式，请单击该图片，图片旁边将会显示布局选项按钮。当处理表格时，单</FullLine>
        <EndLine>
          击要添加行或列的位置，然后单击加号。<Mark>②</Mark>
        </EndLine>
      </p>
      <p>
        <FullLine first>在新的阅读视图中阅读更加容易。可以折叠文档某些部分并关注所需文本。</FullLine>
        <FullLine>
          如果在达到结尾处之前需要停止读取，<span className="font-['Liberation_Mono',monospace] text-[11px] text-[#444]">Word</span>{" "}
          会记住您的停止位置 – 即使在另
        </FullLine>
        <span className="flex h-[21px] items-center gap-0.5">
          一个设备上。
          <span className="h-4 w-px bg-black" />
        </span>
      </p>
    </div>
    <div className="mt-[38px] ml-[56px] h-[137px] w-[214px] border border-black bg-white" />
    <footer className="mt-auto mb-1 text-[9px] leading-[13px] text-[#222]">
      <div className="mb-[6px] w-[154px] border-t border-black" />
      <p>
        <sup className="pr-1 text-[6px]">①</sup>
        office 系列软件中的一款，用于处理文字。
      </p>
      <p>
        <sup className="pr-1 text-[6px]">②</sup>
        举例脚注内容。
      </p>
    </footer>
  </article>
);

/* ---------- status bar ---------- */

const StatusBar = () => (
  <footer className="flex h-[19px] shrink-0 items-center border-t border-r border-t-[#c6c6c6] border-r-[#2b579a] bg-[#f0f0f0] pl-[7px] whitespace-nowrap text-[#444]">
    <div className="flex items-center gap-[21px]">
      <button>第 2 页，共 3 页</button>
      <button>828 个字</button>
      <button>修订: 关闭</button>
      <button>插入</button>
      <button aria-label="宏">
        <Svg w={13} h={12}>
          <path d="M1.500 4v7.500h11V1.500H7" fill="#fff" stroke={G} />
          <path d="M7 2h6" stroke={G} strokeWidth="3" />
          <circle cx="3" cy="3" r="3" fill={G} />
          <path d="M4 6.500h7M4 8.500h7M4 10h7" stroke={G} strokeDasharray="1 1" />
        </Svg>
      </button>
    </div>
    <div className="ml-auto flex h-full items-center pr-[28px]">
      <button aria-label="阅读视图" className="mr-[13px]">
        <Svg w={13} h={12}>
          <path d="M.5.5h4l2 1 2-1h4v10h-4l-2 1-2-1h-4zM6.500 1v11" fill="#fff" stroke={G} />
          <path d="M2 3h3M2 5.500h3M2 8h3M8 3h3M8 5.500h3M8 8h3" stroke={G} />
        </Svg>
      </button>
      <button aria-label="页面视图" className="flex h-full w-[38px] items-center justify-center bg-[#c8c8c8]">
        <Svg w={14} h={13}>
          <path d="M.5.5h13v12H.5z" fill="#fff" stroke="#555" />
          <path d="M2 2.500h10M2 4.500h10M2 6.500h10M2 8.500h10M2 10.500h10" stroke="#555" />
        </Svg>
      </button>
      <button aria-label="Web 版式视图" className="mr-[17px] ml-[12px]">
        <Svg w={14} h={13}>
          <path d="M6 11.500H.5V.5h11V5" fill="#fff" stroke={G} />
          <path d="M2 3h8M2 5.500h6M2 8h4" stroke={G} />
          <circle cx="10" cy="9" r="3.500" fill={G} />
          <path d="M8 8l2 1-1 2M11 7l1 2" stroke="#fff" />
        </Svg>
      </button>
      <button aria-label="缩小">
        <Svg w={7} h={8}>
          <path d="M0 4h7" stroke="#444" strokeWidth="2" />
        </Svg>
      </button>
      <input
        type="range"
        aria-label="缩放"
        min={10}
        max={190}
        defaultValue={80}
        className="mx-[4px] h-3 w-[99px] appearance-none bg-[linear-gradient(#a0a0a0,#a0a0a0),linear-gradient(#a0a0a0,#a0a0a0)] bg-[length:100%_1px,1px_5px] bg-center bg-no-repeat [&::-webkit-slider-thumb]:h-[11px] [&::-webkit-slider-thumb]:w-[4px] [&::-webkit-slider-thumb]:appearance-none [&::-webkit-slider-thumb]:bg-[#444]"
      />
      <button aria-label="放大">
        <Svg w={8} h={8}>
          <path d="M0 4h8M4 0v8" stroke="#444" strokeWidth="2" />
        </Svg>
      </button>
      <button className="ml-[15px]">80%</button>
    </div>
  </footer>
);

const Watermark = () => (
  <div className="pointer-events-none absolute right-[11px] bottom-[7px] z-30 flex items-end opacity-85">
    <svg width="43" height="41" viewBox="0 0 46 42" preserveAspectRatio="none" className="mb-[2px]" aria-hidden="true">
      <defs>
        <linearGradient id="wmBlue" x1="0" y1="1" x2="1" y2="0">
          <stop offset="0" stopColor="#4a6fc0" />
          <stop offset="1" stopColor="#5fc4ee" />
        </linearGradient>
        <linearGradient id="wmGreen" x1="0" y1="1" x2="1" y2="0">
          <stop offset="0" stopColor="#f2e34c" />
          <stop offset=".4" stopColor="#5dbb63" />
          <stop offset="1" stopColor="#4fb0a0" />
        </linearGradient>
      </defs>
      <path d="M45 1C24-1 2 9 1 24c0 5 2 8 7 9C7 20 22 6 45 1z" fill="url(#wmBlue)" />
      <path d="M45 1C34 5 25 9 21 13c10-2 15 3 13 9-3 8-14 14-30 17 20 3 37-6 39-17 1-8-5-12-13-12 4-4 9-7 15-9z" fill="url(#wmGreen)" />
      <path d="M26 14c-9-1-14 4-12 9 3 6 11 5 15-1-4 3-10 2-10-2 0-3 4-5 7-6z" fill="#4a86d0" />
    </svg>
    <div className="text-center">
      <div className="mb-[2px] text-[21px] leading-[24px] font-bold text-[#5b98d4]">极光下载站</div>
      <div className="font-['Liberation_Sans',sans-serif] text-[17px] leading-[18px] text-[#55bb77]">www.xz7.com</div>
    </div>
  </div>
);

export default function App() {
  return (
    <div className="relative flex h-screen flex-col overflow-hidden bg-[#e6e6e6] font-['Open_Sans','Noto_Sans_CJK_SC',sans-serif] text-[12px]">
      <Header />
      <Ribbon />
      <QuickBar />
      <main className="flex min-h-0 flex-1 border-r border-[#2b579a]">
        <div className="flex w-[28px] flex-col">
          <div className="mb-[3px] flex h-[27px] items-center justify-center border-[3px] border-[#d6d6d6] bg-[#fcfcfc] text-[#666]">
            <Svg w={8} h={8}>
              <path d="M1 0v7h7" stroke="#666" strokeWidth="2" />
            </Svg>
          </div>
          <VRuler />
        </div>
        <div className="flex flex-1 flex-col items-center pt-[5px] pr-[16px]">
          <HRuler />
          <div className="flex min-h-0 flex-1 pt-[9px]">
            <Page />
          </div>
        </div>
      </main>
      <StatusBar />
      <Watermark />
    </div>
  );
}
